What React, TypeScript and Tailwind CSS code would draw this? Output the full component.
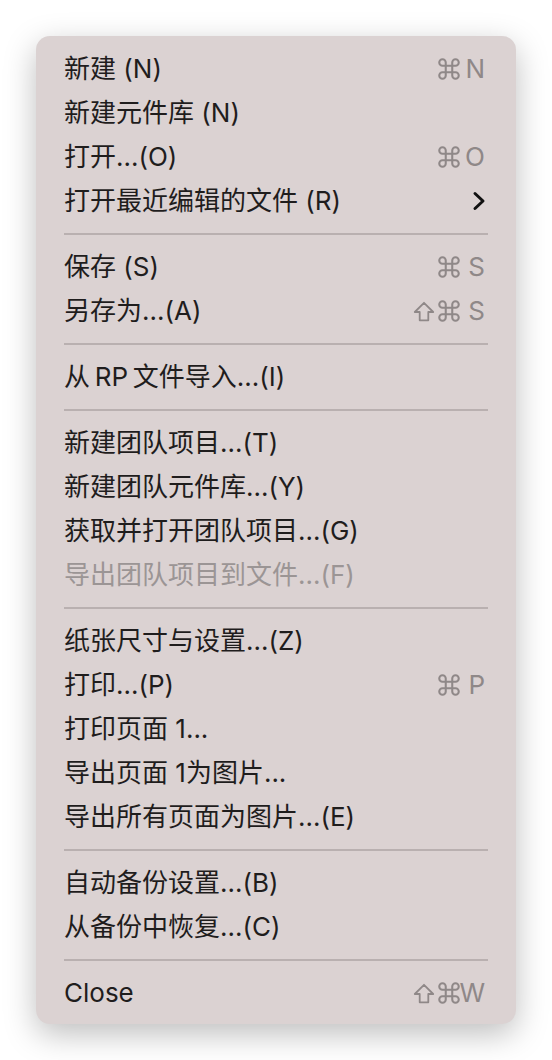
import { Command } from "lucide-react";

type Item =
  | { sep: true }
  | { label: string; keys?: string; shift?: boolean; sub?: boolean; disabled?: boolean; sep?: false };

const ITEMS: Item[] = [
  { label: "新建 (N)", keys: "N" },
  { label: "新建元件库 (N)" },
  { label: "打开...(O)", keys: "O" },
  { label: "打开最近编辑的文件 (R)", sub: true },
  { sep: true },
  { label: "保存 (S)", keys: "S" },
  { label: "另存为...(A)", keys: "S", shift: true },
  { sep: true },
  { label: "从\u2009RP\u2009文件导入...(I)" },
  { sep: true },
  { label: "新建团队项目...(T)" },
  { label: "新建团队元件库...(Y)" },
  { label: "获取并打开团队项目...(G)" },
  { label: "导出团队项目到文件...(F)", disabled: true },
  { sep: true },
  { label: "纸张尺寸与设置...(Z)" },
  { label: "打印...(P)", keys: "P" },
  { label: "打印页面 1..." },
  { label: "导出页面 1为图片..." },
  { label: "导出所有页面为图片...(E)" },
  { sep: true },
  { label: "自动备份设置...(B)" },
  { label: "从备份中恢复...(C)" },
  { sep: true },
  { label: "Close", keys: "W", shift: true },
];

function ShiftGlyph() {
  return (
    <svg width="22" height="21" viewBox="0 0 22 21" className="mr-[1px]">
      <path
        d="M11 1.8 L20.2 11 H15.3 V19.3 H6.7 V11 H1.8 Z"
        fill="none"
        stroke="currentColor"
        strokeWidth="1.8"
        strokeLinejoin="round"
      />
    </svg>
  );
}

function Shortcut({ k, shift }: { k: string; shift?: boolean }) {
  return (
    <div className="flex items-center text-[#8f8888] mr-[3px]">
      {shift && <ShiftGlyph />}
      <Command size={26} strokeWidth={1.9} className="-mr-[3px]" />
      <span className="w-[26px] text-right leading-none">{k}</span>
    </div>
  );
}

export default function App() {
  return (
    <div className="w-[552px] h-[1060px] bg-white pt-[36px] pl-[36px]">
      <div
        className="w-[480px] h-[988px] rounded-[14px] bg-[#dbd2d2] pt-[11px] pb-[9px] px-[28px] shadow-[0_10px_32px_rgba(0,0,0,0.26)] text-[26px] text-[#1f1d1d]"
        style={{ fontFamily: '"Inter", "Noto Sans CJK SC", sans-serif' }}
      >
        {ITEMS.map((it, i) =>
          it.sep ? (
            <div key={i} className="h-[22px] flex items-center">
              <div className="h-[2px] w-full bg-[#b9b0b0]" />
            </div>
          ) : (
            <div key={i} className="h-[44px] flex items-center justify-between">
              <span className={"leading-none " + (it.disabled ? "text-[#9b9595]" : "")}>{it.label}</span>
              {it.keys && <Shortcut k={it.keys} shift={it.shift} />}
              {it.sub && (
                <svg width="14" height="20" viewBox="0 0 14 20" className="mr-[2px]">
                  <path d="M3 2.5 L11 10 L3 17.5" fill="none" stroke="#111" strokeWidth="3" strokeLinecap="round" strokeLinejoin="round" />
                </svg>
              )}
            </div>
          )
        )}
      </div>
    </div>
  );
}
